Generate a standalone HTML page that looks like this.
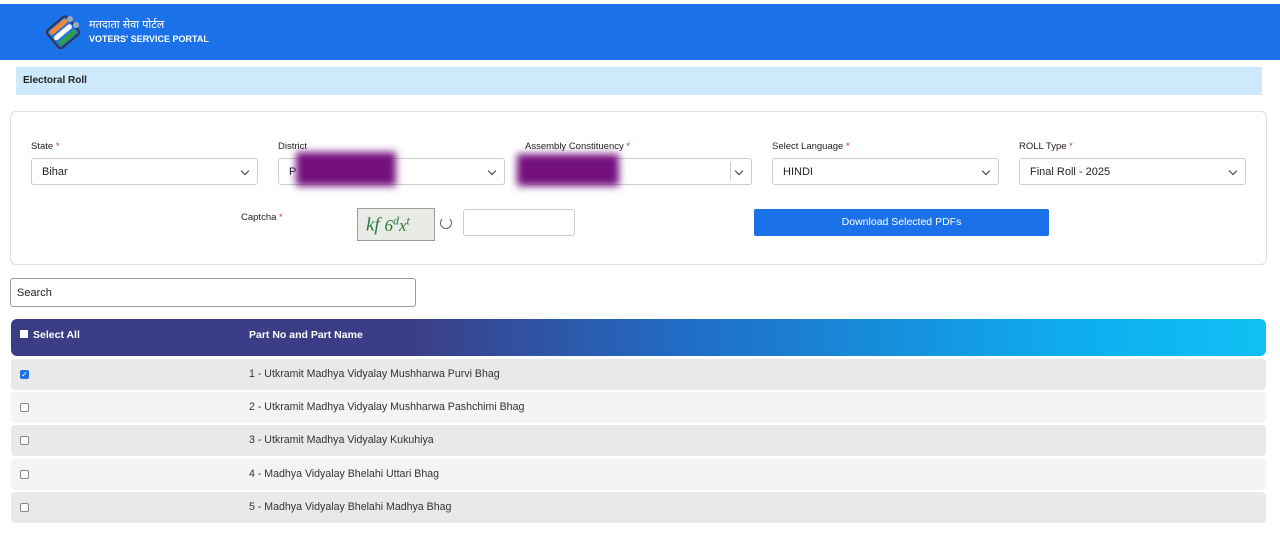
<!DOCTYPE html>
<html><head><meta charset="utf-8"><style>
*{box-sizing:border-box;margin:0;padding:0}
body{width:1280px;height:540px;background:#fff;font-family:"Liberation Sans",Arial,sans-serif;font-size:11px;color:#222;position:relative;overflow:hidden}
.a{position:absolute}
.hdr{left:0;top:4px;width:1280px;height:56px;background:#1b72e8}
.sel{position:absolute;height:27px;border:1px solid #ccc;border-radius:3px;background:#fff;padding:0 10px;line-height:26px;font-size:11px}
.sel:after{content:"";position:absolute;right:9px;top:9px;width:5px;height:5px;border-right:1.5px solid #333;border-bottom:1.5px solid #333;transform:rotate(45deg)}
.lbl{position:absolute;top:141px;font-size:9.5px;color:#222}
.r{color:#d33}
.row{position:absolute;left:11px;width:1255px;height:31px;border-radius:4px}
.row .t{position:absolute;left:238px;top:9px;font-size:10.6px;color:#333}
.cb{position:absolute;left:9px;top:11px;width:9px;height:9px;border:1px solid #888;border-radius:2px;background:#fff}
</style></head><body>
<div class="a hdr"></div>
<svg class="a" style="left:46px;top:14px" width="36" height="36" viewBox="0 0 36 36">
<g transform="rotate(-40 18 18)"><rect x="6" y="8" width="22" height="5" rx="2.5" fill="#f08a3a"/><rect x="6" y="15" width="22" height="5" rx="2.5" fill="#fff"/><rect x="6" y="22" width="22" height="5" rx="2.5" fill="#2e9e4a"/><rect x="4" y="6" width="26" height="23" rx="3" fill="none" stroke="#334" stroke-width="2"/></g>
<circle cx="24" cy="5" r="3" fill="#9aa7c0"/><circle cx="30" cy="11" r="3" fill="#9aa7c0"/></svg>
<div class="a" style="left:89px;top:17px;color:#fff;font-size:11px;font-family:'Liberation Sans','Noto Sans CJK SC',sans-serif">मतदाता सेवा पोर्टल</div>
<div class="a" style="left:89px;top:34px;color:#fff;font-size:9px;font-weight:bold">VOTERS' SERVICE PORTAL</div>
<div class="a" style="left:16px;top:67px;width:1246px;height:28px;background:#cde9fb"></div>
<div class="a" style="left:23px;top:75px;font-size:10px;font-weight:bold">Electoral Roll</div>
<div class="a" style="left:10px;top:111px;width:1257px;height:154px;border:1px solid #ddd;border-radius:6px"></div>
<div class="lbl" style="left:31px">State <span class="r">*</span></div>
<div class="lbl" style="left:278px">District</div>
<div class="lbl" style="left:525px">Assembly Constituency <span class="r">*</span></div>
<div class="lbl" style="left:772px">Select Language <span class="r">*</span></div>
<div class="lbl" style="left:1019px">ROLL Type <span class="r">*</span></div>
<div class="sel" style="left:31px;top:158px;width:227px">Bihar</div>
<div class="sel" style="left:278px;top:158px;width:227px">P</div>
<div class="sel" style="left:525px;top:158px;width:227px"></div>
<div class="sel" style="left:772px;top:158px;width:227px">HINDI</div>
<div class="sel" style="left:1019px;top:158px;width:227px">Final Roll - 2025</div>
<div class="a" style="left:296px;top:152px;width:100px;height:34px;background:#74107e;filter:blur(4px)"></div>
<div class="a" style="left:517px;top:154px;width:102px;height:32px;background:#74107e;filter:blur(4px)"></div>
<div class="a" style="left:730px;top:162px;width:1px;height:19px;background:#ccc"></div>
<div class="a" style="left:241px;top:212px;font-size:9.5px">Captcha <span class="r">*</span></div>
<div class="a" style="left:357px;top:208px;width:78px;height:33px;border:1px solid #999;background:#e8ebe6;font-family:'Liberation Serif',serif;font-style:italic;color:#2a7a3a;font-size:19px;padding:4px 0 0 8px">kf <span style="font-size:17px">6<sup style="font-size:12px">d</sup>x<sup style="font-size:12px">t</sup></span></div>
<div class="a" style="left:440px;top:217px;width:12px;height:12px;border:1.3px solid #666;border-radius:50%;border-top-color:transparent"></div>
<div class="a" style="left:463px;top:209px;width:112px;height:27px;border:1px solid #ccc;border-radius:3px"></div>
<div class="a" style="left:754px;top:209px;width:295px;height:27px;background:#1b72e8;border-radius:2px;color:#fff;text-align:center;line-height:27px;font-size:10.5px">Download Selected PDFs</div>
<div class="a" style="left:10px;top:278px;width:406px;height:29px;border:1px solid #999;border-radius:3px;padding:8px 6px;font-size:11px">Search</div>
<div class="a" style="left:11px;top:319px;width:1255px;height:37px;border-radius:6px;background:linear-gradient(90deg,#3b3e86 0%,#3b3e86 32%,#1f6fc9 55%,#0eaef0 85%,#10c0f4 100%)"></div>
<div class="a" style="left:20px;top:330px;width:8px;height:8px;background:#fff"></div>
<div class="a" style="left:33px;top:329px;color:#fff;font-weight:bold;font-size:10.5px">Select All</div>
<div class="a" style="left:249px;top:329px;color:#fff;font-weight:bold;font-size:10.5px">Part No and Part Name</div>
<div class="row" style="top:359px;background:#e9e9e9"><div class="cb" style="background:#1b72e8;border-color:#1b72e8;color:#fff;font-size:8px;line-height:8px;text-align:center">✓</div><div class="t">1 - Utkramit Madhya Vidyalay Mushharwa Purvi Bhag</div></div>
<div class="row" style="top:392px;background:#f4f4f4"><div class="cb"></div><div class="t">2 - Utkramit Madhya Vidyalay Mushharwa Pashchimi Bhag</div></div>
<div class="row" style="top:425px;background:#e9e9e9"><div class="cb"></div><div class="t">3 - Utkramit Madhya Vidyalay Kukuhiya</div></div>
<div class="row" style="top:459px;background:#f4f4f4"><div class="cb"></div><div class="t">4 - Madhya Vidyalay Bhelahi Uttari Bhag</div></div>
<div class="row" style="top:492px;background:#e9e9e9"><div class="cb"></div><div class="t">5 - Madhya Vidyalay Bhelahi Madhya Bhag</div></div>
</body></html>
